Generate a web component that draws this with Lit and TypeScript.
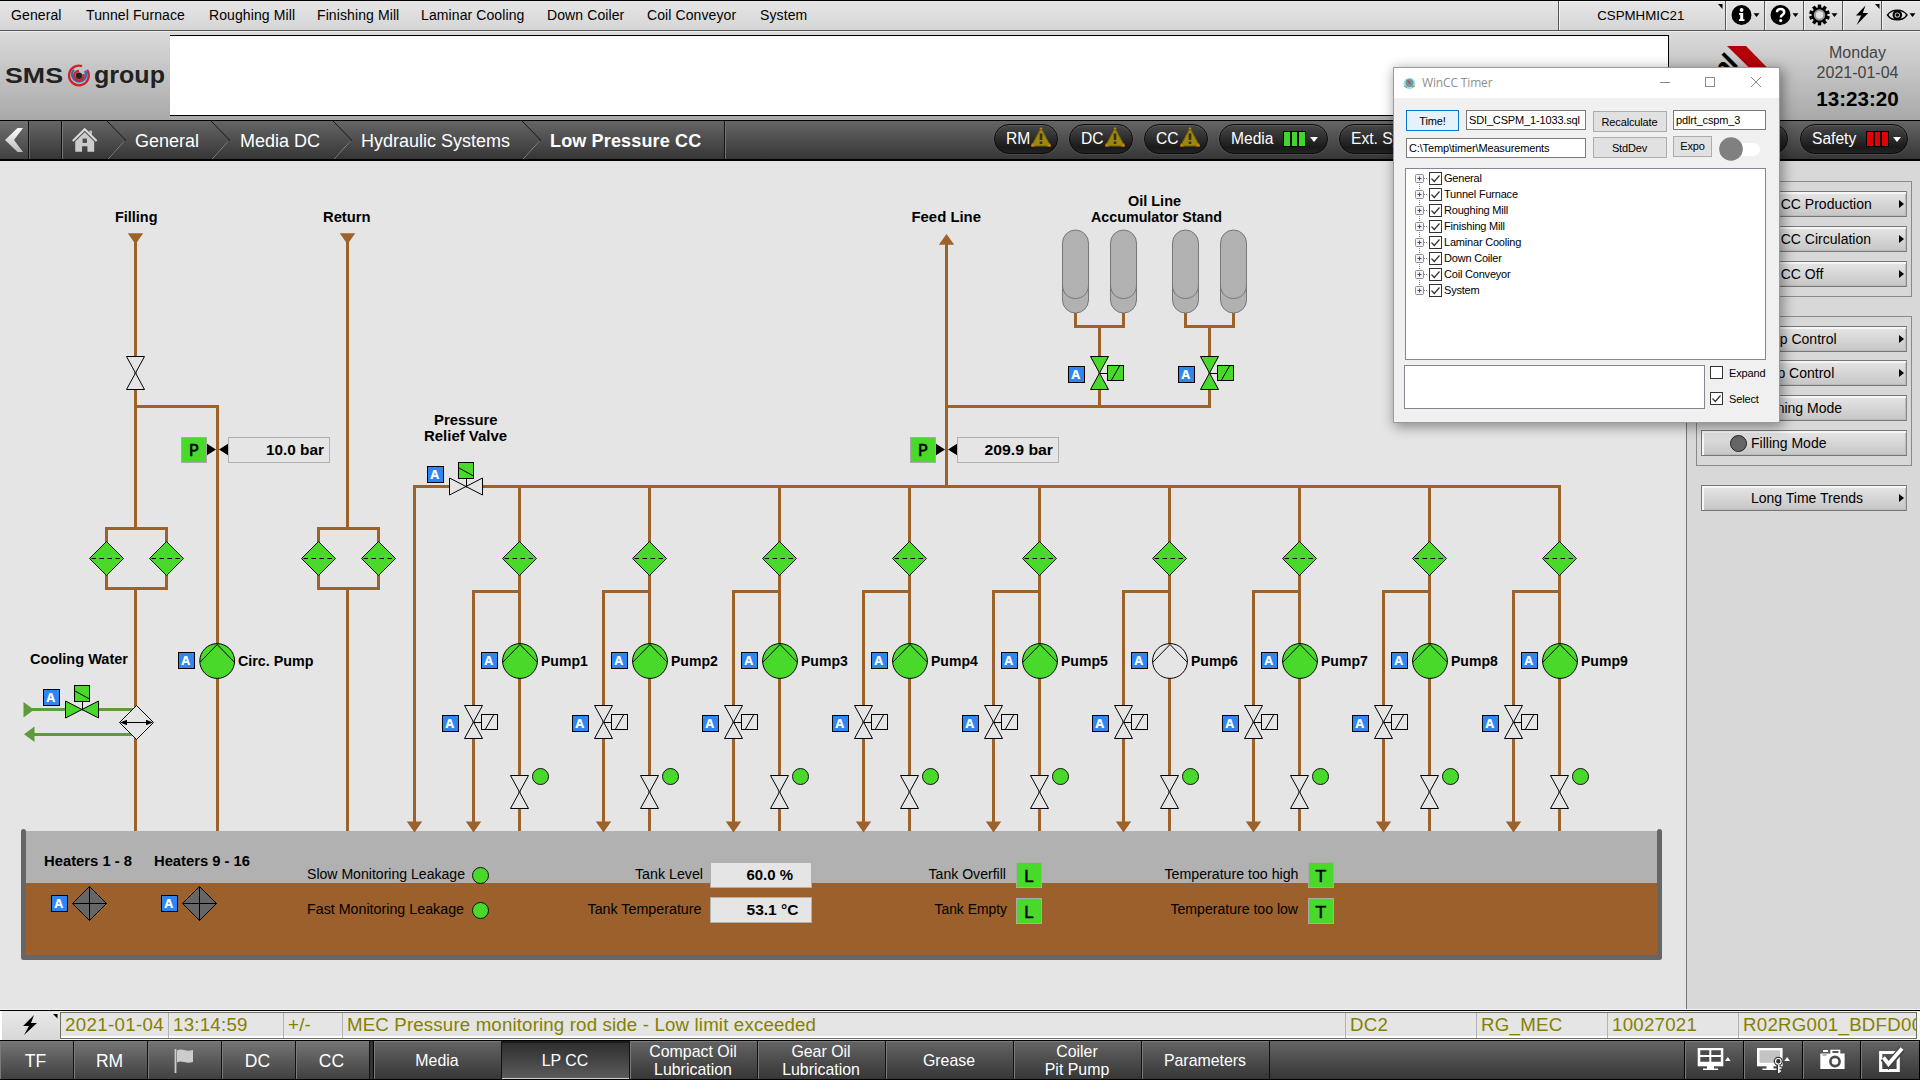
import { LitElement, html, svg, css, nothing } from "lit";
import { customElement } from "lit/decorators.js";
import { classMap } from "lit/directives/class-map.js";

const base = css`
  * { box-sizing: border-box; }
  :host {
    display: block;
    font-family: "Liberation Sans", Arial, sans-serif;
    color: #000;
    flex: none;
  }
  svg { display: block; }
`;

/* ---------- top menu ---------- */

const caret = svg`<path d="M27.5 13.3h6l-3 3.8z"/>`;
const corner = svg`<path d="M32 4h4.5v5z"/>`;
const teeth = [0, 36, 72, 108, 144].map(
  (a) => svg`<rect x="13.8" y="4.6" width="3.4" height="20.8" transform="rotate(${a} 15.5 15)"/>`
);
const topIcons = [
  svg`<circle cx="15.5" cy="15" r="10"/><circle cx="15.6" cy="10" r="1.9" fill="#fff"/>
      <path d="M13 13h4.2v6.2h1.3v1.8h-5.6v-1.8h1.3v-4.4H13z" fill="#fff"/>${caret}`,
  svg`<circle cx="15.5" cy="15" r="10"/>
      <path d="M12 12.3c0-4.400 7.200-4.400 7.200 0 0 2.400-3.400 2.600-3.400 5.200" fill="none" stroke="#fff" stroke-width="2.500"/>
      <circle cx="15.700" cy="20.600" r="1.600" fill="#fff"/>${caret}`,
  svg`${teeth}<circle cx="15.500" cy="15" r="7.800"/><circle cx="15.500" cy="15" r="4.700" fill="#e0e0e0" stroke="#999" stroke-width="2"/>${caret}`,
  svg`<path d="M22.500 5.500l-9.500 10h5.200l-4.600 9.500 11.600-12h-5.400z"/>${corner}`,
  svg`<path d="M5.500 15c4.500-6.500 15-6.500 19.500 0-4.500 6.500-15 6.500-19.500 0z" fill="#e0e0e0" stroke="#000" stroke-width="1.400"/>
      <circle cx="15.300" cy="15" r="4.800"/><circle cx="15.300" cy="15" r="2.600" fill="#ddd"/><circle cx="15.300" cy="15" r="1.800"/>${caret}`,
];

@customElement("top-menu")
export class TopMenu extends LitElement {
  static styles = [base, css`
    .bar {
      height: 31px; display: flex; border-top: 1px solid #000; border-bottom: 1px solid #555;
      background: linear-gradient(#e6e6e6, #d5d5d5); font-size: 14px; line-height: 29px;
      padding-left: 11px;
    }
    .items { flex: 1; display: grid; grid-template-columns: 75px 123px 108px 104px 126px 100px 113px 1fr; letter-spacing: .1px; }
    .btn { border-left: 1px solid #555; box-shadow: inset 1px 1px #f2f2f2; width: 39px; }
    .host { width: 167.500px; text-align: center; font-size: 13.300px; position: relative; padding-right: 2px; }
    .host svg { position: absolute; right: 0; top: -1px; }
  `];
  render() {
    return html`<div class="bar">
      <div class="items">
        ${["General", "Tunnel Furnace", "Roughing Mill", "Finishing Mill", "Laminar Cooling", "Down Coiler", "Coil Conveyor", "System"].map((t) => html`<span>${t}</span>`)}
      </div>
      <div class="btn host">CSPMHMIC21<svg width="9" height="12"><path d="M2 4h4.500v5z"/></svg></div>
      ${topIcons.map((i) => html`<div class="btn"><svg width="38" height="29" viewBox="0 1 38 29">${i}</svg></div>`)}
    </div>`;
  }
}

/* ---------- header with logos and clock ---------- */

@customElement("brand-header")
export class BrandHeader extends LitElement {
  static styles = [base, css`
    .bar { height: 89px; display: flex; background: linear-gradient(#dadada, #a9a9a9); border-top: 1px solid #eee; }
    .board { width: 1499px; height: 81px; margin-top: 3px; background: #fff; border: 1px solid #000; border-left: 0; }
    .clock { flex: 1; padding: 11px 0 0 0; text-align: center; color: #444; font-size: 16px; line-height: 20px; }
    .time { color: #000; font-weight: bold; font-size: 20.600px; line-height: 32px; }
  `];
  render() {
    return html`<div class="bar">
      <svg width="170" height="88" viewBox="0 32 170 88">
        <g font-weight="bold" fill="#222">
          <text x="5" y="83" font-size="22.500" textLength="58" lengthAdjust="spacingAndGlyphs">SMS</text>
          <text x="94" y="82.500" font-size="23" textLength="71" lengthAdjust="spacingAndGlyphs">group</text>
        </g>
        <g fill="none" stroke-width="2.400">
          <path d="M82 66.200a9.800 9.800 0 1 0 5 3.800" stroke="#d2232a"/>
          <path d="M74 69.800a7 7 0 1 0 11 1" stroke="#1c77bd"/>
          <path d="M79 71a4.700 4.700 0 1 0 4.300 3" stroke="#d2232a"/>
        </g>
        <circle cx="79" cy="75.700" r="3.200" fill="#222"/>
      </svg>
      <div class="board"></div>
      <svg width="126" height="88" viewBox="1669 32 126 88">
        <path d="M1727 46h19l22 22.500h-18z" fill="#b5000b"/>
        <text transform="translate(1723 81) rotate(-45)" font-size="27" font-weight="bold" letter-spacing="-1">nl</text>
      </svg>
      <div class="clock"><div>Monday</div><div>2021-01-04</div><div class="time">13:23:20</div></div>
    </div>`;
  }
}

/* ---------- breadcrumb and status pills ---------- */

@customElement("crumb-bar")
export class CrumbBar extends LitElement {
  static styles = [base, css`
    .bar {
      height: 41px; display: flex; background: linear-gradient(#656565, #363636);
      border-top: 1px solid #000; border-bottom: 2px solid #000; color: #fff; font-size: 18px; line-height: 40px;
    }
    .back { width: 28px; background: linear-gradient(#707070, #404040); }
    .gap { width: 34px; border-left: 1px solid #111; border-right: 1px solid #111; box-shadow: inset 1px 0 #666; }
    .home { width: 46px; border-left: 1px solid #777; }
    .crumb { padding-left: 8px; white-space: nowrap; }
    .chev { width: 20px; margin-left: -1px; }
    .c1 { width: 85px; } .c2 { width: 103px; padding-left: 9px; } .c3 { width: 170px; }
    .c4 { width: 183px; font-weight: bold; letter-spacing: .15px; border-right: 1px solid #111; box-shadow: 1px 0 #777; }
    .pills { margin-left: auto; display: flex; padding: 3px 12px 0 0; font-size: 15.600px; line-height: 28px; }
    .pill {
      height: 30px; border: 1px solid #0a0a0a; border-radius: 15px; padding-left: 11px; display: flex; align-items: center;
      background: linear-gradient(#484848, #1a1a1a 80%, #222); box-shadow: 0 0 0 1px #6a6a6a44, inset 0 1px #5a5a5a; width: 64px; margin-right: 11px;
    }
    .pill.wide { width: 109px; }
    .pill.tail { width: 329px; margin-right: 12px; display: block; }
    .pill.safety { width: 108px; margin-right: 0; }
    .bars { display: flex; gap: 2px; margin-left: 11px; }
    .bars i { width: 5.500px; height: 14px; background: #3fd72b; box-shadow: 0 0 0 1px #000; }
    .bars.red i { background: #e20000; }
    .caret { border: 4px solid transparent; border-top: 5px solid #fff; border-bottom: 0; margin-left: 5px; }
    .warn { margin: -4px 0 0 1px; }
  `];
  warn() {
    return html`<svg class="warn" width="20" height="20" viewBox="0 0 20 20">
      <path d="M10 1L19.500 19h-19z" fill="#9c8710" stroke="#74620c"/><path d="M1 16l-1 3.500h4zM19 16l1 3.500h-4zM8.500 2L10 0l1.500 2z" fill="#d87f1c"/>
      <path d="M10 6.500v6.500M10 14.500v2.500" stroke="#38300a" stroke-width="2.600"/></svg>`;
  }
  bars(red = false) {
    return html`<span class=${classMap({ bars: true, red })}><i></i><i></i><i></i></span><span class="caret"></span>`;
  }
  render() {
    const crumbs = ["General", "Media DC", "Hydraulic Systems", "Low Pressure CC"];
    return html`<div class="bar">
      <svg class="back" width="28" height="38"><defs><linearGradient id="g" x2="0" y2="1"><stop stop-color="#fff"/><stop offset="1" stop-color="#bbb"/></linearGradient></defs>
        <path d="M17.500 7h5.500l-9 12 9 12h-5.500L5 19z" fill="url(#g)"/></svg>
      <div class="gap"></div>
      <svg class="home" width="46" height="38" viewBox="62 121 46 38">
        <path d="M72 141l12.200-12 12.200 12" fill="none" stroke="#ddd" stroke-width="2"/><path d="M89 130.500h2.500v5l-2.500-2.500z" fill="#ccc"/>
        <path d="M74.500 141.500l9.700-9.500 9.700 9.500V152H87v-5.500h-5.500V152h-7z" fill="#ccc"/><path d="M82 138.500h4.500v4.500H82z" fill="#4d4d4d"/>
      </svg>
      ${crumbs.map((c, i) => html`<div class="chev"><svg width="20" height="38"><path d="M0 0L18.500 19 0.500 38" fill="none" stroke="#161616"/><path d="M17.500 20L1 38" fill="none" stroke="#8a8a8a"/></svg></div>
        <div class="crumb c${i + 1}">${c}</div>`)}
      <div class="pills">
        ${["RM", "DC", "CC"].map((t) => html`<div class="pill">${t}${this.warn()}</div>`)}
        <div class="pill wide">Media${this.bars()}</div>
        <div class="pill wide">Ext. Sys.</div>
        <div class="pill tail"></div>
        <div class="pill safety">Safety${this.bars(true)}</div>
      </div>
    </div>`;
  }
}

/* ---------- process diagram ---------- */

const BG = "#e5e5e5";
const GREEN = "#48d92b";
const PIPE = "#9d612a";

const label = (x: number, y: number, s: string, w: number, bold = true) => svg`
  <text x=${x} y=${y} font-weight=${bold ? "bold" : "normal"} textLength=${w} lengthAdjust="spacingAndGlyphs">${s}</text>`;

const auto = (x: number, y: number) => svg`
  <rect x=${x} y=${y} width="16" height="16" fill="#2e86f2" stroke="#000"/>
  <text x=${x + 7.2} y=${y + 12.3} class="auto">A</text>`;

const filter = (x: number, y = 558.5) => svg`
  <path d="M${x - 17} ${y}l17-17 17 17-17 17z" fill=${GREEN} stroke="#111"/>
  <path d="M${x - 15} ${y}h31" stroke="#000" stroke-width="1.200" stroke-dasharray="4.500 3.500"/>`;

const handValve = (x: number, y: number, fill = BG) => svg`
  <rect x=${x - 2} y=${y - 16.5} width="4" height="33" fill=${BG}/>
  <path d="M${x - 9} ${y - 16.5}h18l-18 33h18z" fill=${fill} stroke="#000"/>
  <rect x=${x - 1} y=${y - 1} width="2" height="2" fill="#4a2a10"/>`;

const solenoidValve = (x: number, y: number, fill = BG) => svg`
  ${handValve(x, y, fill)}
  <path d="M${x} ${y + 0.5}h8" stroke="#000"/>
  <rect x=${x + 8} y=${y - 7.5} width="16" height="15" fill=${fill} stroke="#000"/>
  <path d="M${x + 12} ${y + 7}l8-14" stroke="#000"/>
  ${auto(x - 31, y - 6.5)}`;

const reliefValve = (x: number, y: number, fill = BG) => svg`
  <rect x=${x - 16.5} y=${y - 2} width="33" height="4" fill=${BG}/>
  <path d="M${x - 16.5} ${y - 8.5}v17l33-17v17z" fill=${fill} stroke="#000"/>
  <path d="M${x + 0.5} ${y - 8}v9" stroke="#000"/>
  <rect x=${x - 7.5} y=${y - 24} width="15" height="16" fill=${GREEN} stroke="#000"/>
  <path d="M${x - 7} ${y - 18.5}l14.500 8" stroke="#000"/>
  ${auto(x - 38.5, y - 20)}`;

const pump = (x: number, fill: string) => svg`
  <circle cx=${x} cy="661" r="17.400" fill=${fill} stroke="#000"/>
  <path d="M${x - 17} 662l17-17.500 17 17.500" fill="none" stroke="#000"/>`;

const led = (x: number, y: number) => svg`<circle cx=${x} cy=${y} r="8" fill=${GREEN} stroke="#111"/>`;

const sensor = (x: number, y: number, s: string, ty = 18.5) => svg`
  <rect x=${x} y=${y} width="25" height="25" fill=${GREEN} stroke="#aaa"/>
  <text x=${x + 12.2} y=${y + ty} class="sensor">${s}</text>`;

const value = (x: number, y: number, tx: number, s: string, w: number) => svg`
  <rect x=${x} y=${y} width="101" height="25" fill=${BG} stroke="#b0b0b0"/>
  ${label(tx, y + 17.5, s, w)}`;

const arrowDown = (x: number, y: number) => svg`<path d="M${x - 7.7} ${y}h15.400L${x} ${y + 11}z" fill=${PIPE}/>`;

const pressure = (x: number, tx: number, s: string, w: number) => svg`
  ${sensor(x - 36, 437.5, "P")}
  <path d="M${x - 10.5} 443.800l9 5.700-9 5.700zM${x + 10.5} 443.800l-9 5.700 9 5.700z"/>
  ${value(x + 11, 437.5, tx, s, w)}`;

const bottle = (x: number) => svg`
  <rect x=${x - 13} y="230" width="26" height="83" rx="13" fill="#b1b1b1" stroke="#777"/>
  <path d="M${x - 13} 285c0 18 26 18 26 0" fill="none" stroke="#777"/>`;

const heater = (x: number) => svg`
  ${auto(x - 38, 895.5)}
  <path d="M${x - 17} 903.500l17-17 17 17-17 17zM${x - 17} 903.500h34M${x} 886.500v34" fill="#666" stroke="#000"/>`;

@customElement("plant-diagram")
export class PlantDiagram extends LitElement {
  static styles = [base, css`
    text { font-size: 14px; white-space: pre; }
    .auto { font: bold 11.500px "DejaVu Sans", sans-serif; fill: #fff; text-anchor: middle; }
    .sensor { font: 16.500px "DejaVu Sans", sans-serif; text-anchor: middle; stroke: #000; stroke-width: .5px; }
    .canvas { background: #e5e5e5; }
  `];
  render() {
    const pumps = Array.from({ length: 9 }, (_, i) => ({ n: i + 1, x: 519.5 + i * 130 }));
    return html`<svg class="canvas" width="1686" height="848" viewBox="0 161 1686 848">
      <rect x="26" y="831" width="1632" height="53" fill="#b1b1b1"/>
      <rect x="26" y="883" width="1632" height="72" fill="#9b602b"/>
      <path d="M23.500 831.500V957.500H1659.500V831.500" fill="none" stroke="#666" stroke-width="5" stroke-linecap="round" stroke-linejoin="round"/>
      <g fill="none" stroke=${PIPE} stroke-width="3">
        <path d="M135.500 240V528.500M106.500 558V528.500H166.500V588.500H106.500V558M135.500 588.500V831M135.500 406.500H217.500V831"/>
        <path d="M347.500 240V528.500M318.500 558V528.500H378.500V588.500H318.500V558M347.500 588.500V831"/>
        <path d="M414.500 824V486.500H1559.500"/>
        <path d="M946.500 242V486.500M946.500 406.500H1209.500V326.500M1099.500 406.500V326.500M1075.500 313V326.500H1123.500V313M1185.500 313V326.500H1233.500V313"/>
        ${pumps.map((p) => svg`<path d="M${p.x} 485V831M${p.x} 591.500H${p.x - 46}V824"/>`)}
      </g>
      ${arrowDown(135.5, 233.2)}${arrowDown(347.5, 233.2)}${arrowDown(414.5, 821.5)}
      <path d="M938.800 244.800h15.400L946.500 234z" fill=${PIPE}/>
      <g fill="none" stroke="#5f9a3c" stroke-width="3"><path d="M30 709.500H136M30 734.500H136"/></g>
      <path d="M23.500 702v15.500l10.500-7.750zM34.500 726.500v15.500L24 734.250z" fill="#5f9a3c"/>

      ${label(115, 222, "Filling", 42.5)}${label(323, 222, "Return", 47.5)}
      ${label(911.5, 222, "Feed Line", 69.5)}${label(1128, 206, "Oil Line", 53)}${label(1091, 222, "Accumulator Stand", 131)}
      ${label(434, 425, "Pressure", 63.5)}${label(424, 441, "Relief Valve", 83)}
      ${label(30, 664, "Cooling Water", 98)}${label(238, 666, "Circ. Pump", 75.5)}
      ${label(44, 866, "Heaters 1 - 8", 88)}${label(154, 866, "Heaters 9 - 16", 96)}

      ${handValve(135.5, 373)}
      ${[106.5, 166.5, 318.5, 378.5].map((x) => filter(x))}
      ${pressure(217.5, 266, "10.0 bar", 58)}
      ${pressure(946.5, 984.5, "209.9 bar", 68.5)}
      ${[1075.5, 1123.5, 1185.5, 1233.5].map(bottle)}
      ${solenoidValve(1099.5, 373, GREEN)}${solenoidValve(1209.5, 373, GREEN)}
      ${reliefValve(466, 486.5)}
      ${reliefValve(82, 709.5, GREEN)}
      <path d="M119.500 722.500l17-17 17 17-17 17z" fill=${BG} stroke="#000"/>
      <path d="M122 722.500h29" stroke="#000"/><path d="M120 722.500l7-2.700v5.400zM153 722.500l-7-2.700v5.400z"/>
      ${auto(178.5, 652.5)}${pump(217.2, GREEN)}

      ${pumps.map((p) => svg`
        ${filter(p.x)}
        ${auto(p.x - 38, 652.5)}${pump(p.x + 0.5, p.n === 6 ? BG : GREEN)}
        ${label(p.x + 21.5, 666, "Pump" + p.n, 46.8)}
        ${solenoidValve(p.x - 46, 722)}
        ${handValve(p.x, 792)}${led(p.x + 21, 776.5)}
        ${arrowDown(p.x - 46, 821.5)}`)}

      ${heater(89.5)}${heater(199.5)}
      ${label(307, 879, "Slow Monitoring Leakage", 158, false)}${led(480.5, 875.5)}
      ${label(307, 914, "Fast Monitoring Leakage", 157, false)}${led(480.5, 910.5)}
      ${label(635, 879, "Tank Level", 68, false)}${value(710.5, 862.5, 746.5, "60.0 %", 46.5)}
      ${label(587.5, 914, "Tank Temperature", 114, false)}${value(710.5, 897.5, 746.5, "53.1 °C", 52)}
      ${label(928.5, 879, "Tank Overfill", 77.5, false)}${sensor(1016.5, 862.5, "L", 19.5)}
      ${label(934.5, 914, "Tank Empty", 72.5, false)}${sensor(1016.5, 898.5, "L", 19.5)}
      ${label(1164.5, 879, "Temperature too high", 134, false)}${sensor(1308.5, 862.5, "T", 19.5)}
      ${label(1170.5, 914, "Temperature too low", 127.5, false)}${sensor(1308.5, 898.5, "T", 19.5)}
    </svg>`;
  }
}

/* ---------- operator buttons on the right ---------- */

@customElement("side-panel")
export class SidePanel extends LitElement {
  static styles = [base, css`
    :host { width: 234px; height: 848px; }
    .panel { height: 100%; background: #d8d8d8; border-left: 1px solid #777; padding: 20px 8px 0 9px; }
    .group { border: 1px solid #8a8a8a; padding: 9px 4px; display: flex; flex-direction: column; gap: 9px; margin-bottom: 19px; }
    .group.bare { border: 0; padding: 0 5px; }
    .btn {
      height: 26px; border: 1px solid #777; border-right-color: #888; box-shadow: inset 2px 2px #f6f6f6, inset -1px -1px #bbb;
      background: linear-gradient(#e6e6e6, #c6c6c6); font-size: 14px; line-height: 25px; padding-left: 49px; display: flex; align-items: center;
    }
    .btn.near { margin-bottom: -1px; }
    .btn.in { padding-left: 58px; }
    .arrow { border: 4px solid transparent; border-left: 5px solid #000; border-right: 0; margin: 0 2px 0 auto; }
    .lamp { width: 17px; height: 17px; border-radius: 50%; background: #666; border: 1px solid #222; margin: 0 4px 0 -21px; }
  `];
  btn(t: string, arrow = true, cls = "") {
    return html`<div class="btn ${cls}">${cls === "lit" ? html`<span class="lamp"></span>` : nothing}${t}${arrow ? html`<span class="arrow"></span>` : nothing}</div>`;
  }
  render() {
    return html`<div class="panel">
      <div class="group">${this.btn("LP CC Production", true, "in")}${this.btn("LP CC Circulation", true, "in")}${this.btn("LP CC Off", true, "in")}</div>
      <div class="group">${this.btn("Pump Control", true, "near")}${this.btn("Temp Control")}${this.btn("Running Mode", false)}${this.btn("Filling Mode", false, "lit")}</div>
      <div class="group bare">${this.btn("Long Time Trends")}</div>
    </div>`;
  }
}

/* ---------- alarm line ---------- */

@customElement("alarm-line")
export class AlarmLine extends LitElement {
  static styles = [base, css`
    .bar { height: 31px; border-top: 1px solid #000; border-bottom: 1px solid #000; background: #f4f4f4; display: flex; box-shadow: 0 -1px #f4f4f4; margin-top: 1px; }
    .btn { width: 60px; background: linear-gradient(#e8e8e8, #d8d8d8); border-left: 2px solid #fff; }
    .cells {
      width: 1857px; height: 27px; margin-top: 1px; border: 1px solid #6f6f5c; background: #e5e5e5; display: grid; overflow: hidden;
      grid-template-columns: 107px 115px 59px 1003px 131px 131px 131px 1fr; color: #868000; font-size: 18.700px; line-height: 24px; box-shadow: inset 0 -2px #fff;
    }
    .cells span { border-left: 1px solid #b4b4b4; padding-left: 4px; white-space: nowrap; overflow: hidden; letter-spacing: .25px; }
    .cells span:nth-child(4) { letter-spacing: .15px; }
    .cells span:first-child { border: 0; letter-spacing: .35px; }
  `];
  render() {
    return html`<div class="bar">
      <div class="btn"><svg width="58" height="29" viewBox="2 1011 58 29"><path d="M34 1015l-11 11h6l-5 9 13-12h-6z"/><path d="M53 1014h4.500v4.500z"/></svg></div>
      <div class="cells">${["2021-01-04", "13:14:59", "+/-", "MEC Pressure monitoring rod side - Low limit exceeded", "DC2", "RG_MEC", "10027021", "R02RG001_BDFD001"].map((t) => html`<span>${t}</span>`)}</div>
    </div>`;
  }
}

/* ---------- bottom navigation ---------- */

const tools = [
  svg`<path d="M12.700 7h25.600v18.300H12.700z" fill="#fff"/><path d="M15.300 9.300h9v4.700h-9zM26.300 9.300h9.500v4.700h-9.500zM15.300 16h9v4.700h-9zM26.300 16h9.500v4.700h-9.500z" fill="#4a4a4a"/>
      <path d="M22 25h7v2.500h4V29H18v-1.500h4zM40 20l2.800-4 2.800 4z" fill="#fff"/>`,
  svg`<path d="M13 7h25.600v18.300H13z" fill="#fff"/><path d="M15.500 9.300h20.500v12.500H15.500z" fill="#c3c3c3"/>
      <path d="M22.500 25h7v2.500h4V29H18.500v-1.500h4zM40.300 20l2.800-4 2.800 4z" fill="#fff"/>
      <circle cx="34.300" cy="20.300" r="4.500" fill="#333"/><circle cx="34.300" cy="20.300" r="2.800" fill="none" stroke="#fff" stroke-width="1.200"/>
      <path d="M34.500 24v8" stroke="#333" stroke-width="4"/><path d="M34.800 24v8M35 27h2.500M35 30h2" stroke="#fff" stroke-width="1.500"/>`,
  svg`<path d="M17.300 12.500h10V8.700h10v3.800h4.300V28H17.300z" fill="#fff"/><path d="M29.500 10h6v2h-6z" fill="#555"/><path d="M20 9h5v2h-5z" fill="#fff"/><path d="M19.500 14h4" stroke="#777"/>
      <circle cx="32" cy="20.500" r="4.600" fill="#fff" stroke="#4a4a4a" stroke-width="2.600"/>`,
  svg`<path d="M19.700 11.500h17.500v18H19.700z" fill="none" stroke="#fff" stroke-width="3.200"/><path d="M22.500 17l5 6.500L41 8" fill="none" stroke="#444" stroke-width="7"/>
      <path d="M22.500 16.500l5 6.500L41 7.500" fill="none" stroke="#fff" stroke-width="3.800"/>`,
];

@customElement("foot-nav")
export class FootNav extends LitElement {
  static styles = [base, css`
    .bar { height: 39px; display: flex; background: linear-gradient(#646464, #363636); border-bottom: 1px solid #000; color: #fff; }
    .btn {
      border-right: 1px solid #111; box-shadow: inset 1px 1px #7a7a7a; display: flex; align-items: center; justify-content: center;
      text-align: center; font-size: 15.900px; line-height: 18px; width: 128px; white-space: pre-line; padding: 1px 1px 0 0;
    }
    .area { width: 74px; background: linear-gradient(#757575, #404040); font-size: 17.500px; padding-right: 2px; }
    .gap { width: 4px; background: #333; border-right: 1px solid #000; }
    .on { background: linear-gradient(#2c2c2c, #5c5c5c); box-shadow: inset 0 -1px #ccc, inset 0 2px #1b1b1b; }
    .tools { margin-left: auto; display: flex; border-left: 1px solid #000; }
    .tool { width: 58.750px; border-right: 1px solid #000; box-shadow: inset 1px 1px #7a7a7a; }
  `];
  render() {
    return html`<div class="bar">
      ${["TF", "RM", "", "DC", "CC"].map((t) => html`<div class="btn area">${t || html`<svg width="24" height="26"><path d="M3.500 1v24" stroke="#ccc" stroke-width="1.800"/><path d="M5 2.500c5-3 8 2 16-.500v12c-8 2.500-11-2.500-16 .500z" fill="#ccc"/></svg>`}</div>`)}
      <div class="gap"></div>
      ${["Media", "LP CC", "Compact Oil\nLubrication", "Gear Oil\nLubrication", "Grease", "Coiler\nPit Pump", "Parameters"].map((t) => html`<div class=${classMap({ btn: true, on: t === "LP CC" })}>${t}</div>`)}
      <div class="tools">${tools.map((t) => html`<div class="tool"><svg width="58" height="38">${t}</svg></div>`)}</div>
    </div>`;
  }
}

/* ---------- floating timer window ---------- */

@customElement("timer-window")
export class TimerWindow extends LitElement {
  static styles = [base, css`
    .win { width: 387px; height: 356px; background: #f0f0f0; border: 1px solid #9a9a9a; box-shadow: 2px 3px 12px 1px #0006; font-size: 11px; letter-spacing: -.15px; }
    .title { height: 30px; background: #fff; display: flex; align-items: center; padding-left: 9px; color: #8f8f8f; font: 12px "Open Sans", sans-serif; }
    .title .ctl { margin-left: auto; }
    .title .name { padding: 0 0 2px 6px; }
    .form { display: grid; grid-template-columns: 180px 74px 94px; column-gap: 6.500px; padding: 12px 0 0 12px; height: 70px; grid-template-rows: 22px 28px; row-gap: 5px; }
    .pair { display: flex; gap: 7px; }
    .b { height: 21px; border: 1px solid #adadad; background: #e1e1e1; text-align: center; line-height: 20px; }
    .b.prime { border-color: #0078d7; background: #e5f1fb; width: 53px; }
    .b.low { margin-top: 1px; }
    .b.expo { width: 39px; line-height: 19px; margin-top: -1px; }
    .i { height: 20px; border: 1px solid #7a7a7a; background: #fff; padding-left: 2px; line-height: 18px; flex: 1; white-space: nowrap; }
    .i.last { width: 93px; flex: none; }
    .pad { padding-top: 1px; }
    .tree { margin: 0 0 0 11px; width: 361px; height: 192px; border: 1px solid #828790; background: #fff; padding: 1px 0 0 9px; }
    .row { height: 16px; display: flex; align-items: center; line-height: 16px; font-size: 11px; letter-spacing: -.2px; }
    .row .t { padding-left: 2px; }
    .foot { display: flex; margin: 5px 0 0 10px; gap: 5px; }
    .memo { width: 301px; height: 44px; border: 1px solid #828790; background: #fff; }
    .opts { display: grid; gap: 13px; align-content: start; padding-top: 1px; }
    .opt { display: flex; gap: 6px; height: 13px; line-height: 14px; }
  `];
  check(on: boolean) {
    return html`<svg width="13" height="13"><rect x=".5" y=".5" width="12" height="12" fill="#fff" stroke="#333"/>${on ? svg`<path d="M2.500 6.500l2.800 3 5.200-6" fill="none" stroke="#333" stroke-width="1.200"/>` : nothing}</svg>`;
  }
  render() {
    const nodes = ["General", "Tunnel Furnace", "Roughing Mill", "Finishing Mill", "Laminar Cooling", "Down Coiler", "Coil Conveyor", "System"];
    return html`<div class="win">
      <div class="title">
        <svg width="13" height="13"><circle cx="6.500" cy="6.500" r="5.800" fill="#a9ddd2"/><circle cx="6.500" cy="6" r="4" fill="#5d9fb0"/><path d="M4 3l3 1 1 4-3-2z" fill="#d04a45"/><path d="M1 9l3 1.500M9 10l3-1" stroke="#9a8d5c"/></svg>
        <span class="name">WinCC Timer</span>
        <svg class="ctl" width="119" height="30" viewBox="1660 68 119 30" fill="none" stroke="#8a8a8a"><path d="M1660 82.500h10"/><rect x="1705.500" y="77.500" width="9" height="9"/><path d="M1751 77l10 10M1761 77l-10 10"/></svg>
      </div>
      <div class="form">
        <div class="pair"><div class="b prime">Time!</div><div class="i">SDI_CSPM_1-1033.sql</div></div>
        <div class="b low">Recalculate</div>
        <div class="i last">pdlrt_cspm_3</div>
        <div class="pair pad"><div class="i">C:\\Temp\\timer\\Measurements</div></div>
        <div class="b">StdDev</div>
        <div class="pair"><div class="b expo">Expo</div><svg width="42" height="25"><rect x="10" y="6" width="31" height="13" rx="6.500" fill="#fff"/><circle cx="12" cy="12" r="11.800" fill="#808080"/></svg></div>
      </div>
      <div class="tree">
        ${nodes.map((n, i) => html`<div class="row">
          <svg width="14" height="16">
            <path d="M4.500 ${i ? 0 : 8}V${i < 7 ? 16 : 8}M9 8.500h4" stroke="#888" stroke-dasharray="1 1"/>
            <rect x=".5" y="4.500" width="8" height="8" rx="1" fill="#f4f4f4" stroke="#919191"/><path d="M2.500 8.500h4M4.500 6.500v4" stroke="#2b4a9b"/>
          </svg>${this.check(true)}<span class="t">${n}</span></div>`)}
      </div>
      <div class="foot"><div class="memo"></div><div class="opts">
        <div class="opt">${this.check(false)}Expand</div><div class="opt">${this.check(true)}Select</div></div></div>
    </div>`;
  }
}

@customElement("app-root")
export class AppRoot extends LitElement {
  static styles = [base, css`
    :host { width: 1920px; height: 1080px; overflow: hidden; position: relative; background: #e5e5e5; }
    .page { display: flex; flex-direction: column; height: 1080px; }
    .main { display: flex; height: 848px; flex: none; }
    .float { position: absolute; left: 1393px; top: 67px; }
  `];
  render() {
    return html`<div class="page">
        <top-menu></top-menu>
        <brand-header></brand-header>
        <crumb-bar></crumb-bar>
        <div class="main"><plant-diagram></plant-diagram><side-panel></side-panel></div>
        <alarm-line></alarm-line>
        <foot-nav></foot-nav>
      </div>
      <timer-window class="float"></timer-window>`;
  }
}
